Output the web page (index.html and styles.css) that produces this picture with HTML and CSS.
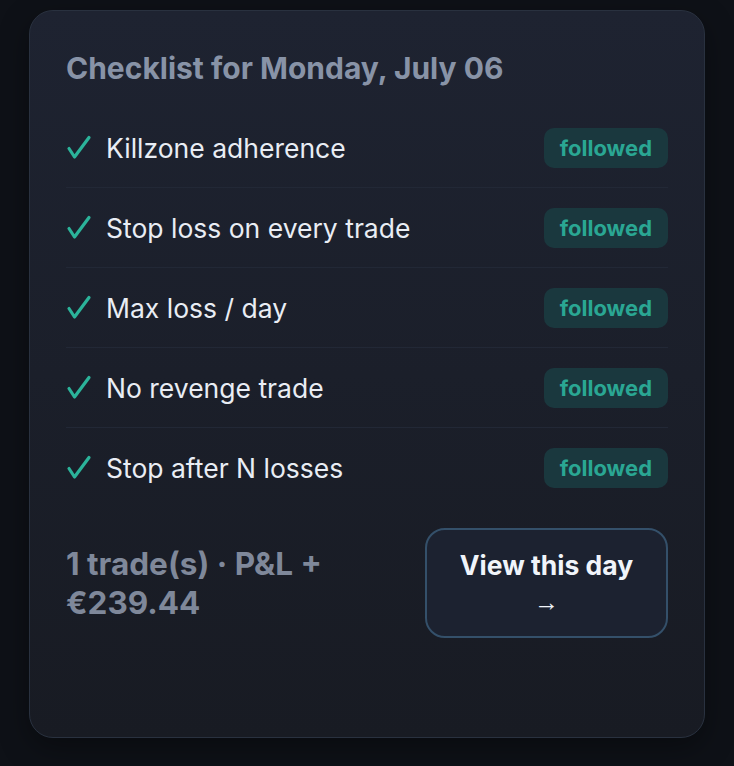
FILE: index.html
```html
<!DOCTYPE html>
<html lang="en">
<head>
  <meta charset="UTF-8" />
  <meta name="viewport" content="width=device-width, initial-scale=1.0"/>
  <title>Daily Checklist</title>
  <link rel="stylesheet" href="styles.css">
</head>
<body>
  <div class="checklist-card">
    <h2>Checklist for Monday, July 06</h2>
    <ul class="rules">
      <li class="rule">
        <svg class="check" viewBox="0 0 26 26"><path d="M3 13.5 L8.5 22 L23 2.5"/></svg>
        <span class="rule-name">Killzone adherence</span>
        <span class="badge">followed</span>
      </li>
      <li class="rule">
        <svg class="check" viewBox="0 0 26 26"><path d="M3 13.5 L8.5 22 L23 2.5"/></svg>
        <span class="rule-name">Stop loss on every trade</span>
        <span class="badge">followed</span>
      </li>
      <li class="rule">
        <svg class="check" viewBox="0 0 26 26"><path d="M3 13.5 L8.5 22 L23 2.5"/></svg>
        <span class="rule-name">Max loss / day</span>
        <span class="badge">followed</span>
      </li>
      <li class="rule">
        <svg class="check" viewBox="0 0 26 26"><path d="M3 13.5 L8.5 22 L23 2.5"/></svg>
        <span class="rule-name">No revenge trade</span>
        <span class="badge">followed</span>
      </li>
      <li class="rule">
        <svg class="check" viewBox="0 0 26 26"><path d="M3 13.5 L8.5 22 L23 2.5"/></svg>
        <span class="rule-name">Stop after N losses</span>
        <span class="badge">followed</span>
      </li>
    </ul>
    <div class="summary">
      <div class="summary-text">1 trade(s) · P&amp;L + €239.44</div>
      <button class="view-btn">View this day <span class="arrow">→</span></button>
    </div>
  </div>
</body>
</html>
```

FILE: styles.css
```css
body {
  font-family: Inter, "Noto Sans", sans-serif;
  background-color: #0e1117;
  margin: 0;
  padding: 10px 29px 28px;
}
.checklist-card {
  box-sizing: border-box;
  min-height: 728px;
  background: linear-gradient(180deg, #1e2331 0%, #181b23 100%);
  border: 1px solid #29313f;
  border-radius: 24px;
  padding: 40px 36px;
  box-shadow: 0 10px 30px rgba(0,0,0,0.35);
}
h2 {
  margin: 0 0 23px;
  font-size: 30px;
  line-height: 34px;
  font-weight: 700;
  color: #8893a7;
}
.rules {
  list-style: none;
  margin: 0;
  padding: 0;
}
.rule {
  display: flex;
  align-items: center;
  height: 40px;
  padding: 20px 0 19px;
  border-bottom: 1px solid #222836;
}
.rule:last-child {
  border-bottom: none;
}
.check {
  width: 26px;
  height: 26px;
  margin: 0 14px 0 0;
  fill: none;
  stroke: #2bb39a;
  stroke-width: 3.2;
  stroke-linecap: round;
  stroke-linejoin: round;
}
.rule-name {
  flex: 1;
  font-size: 26.5px;
  color: #e9edf4;
}
.badge {
  display: inline-block;
  padding: 0 16px;
  height: 40px;
  line-height: 40px;
  border-radius: 10px;
  background-color: #1a383e;
  color: #2aa793;
  font-size: 22px;
  font-weight: 700;
}
.summary {
  display: flex;
  align-items: center;
  gap: 24px;
  margin-top: 21px;
}
.summary-text {
  flex: 1;
  font-size: 31.5px;
  line-height: 39px;
  font-weight: 700;
  color: #7f889a;
}
.view-btn {
  width: 243px;
  padding: 17px 20px 16px;
  background-color: #1c2230;
  border: 2px solid #34506a;
  border-radius: 20px;
  color: #f0f4fa;
  font-family: inherit;
  font-size: 26.5px;
  line-height: 36px;
  font-weight: 700;
  cursor: pointer;
}
.arrow {
  font-family: "Liberation Sans", sans-serif;
  font-weight: 400;
  font-size: 25px;
}
```
